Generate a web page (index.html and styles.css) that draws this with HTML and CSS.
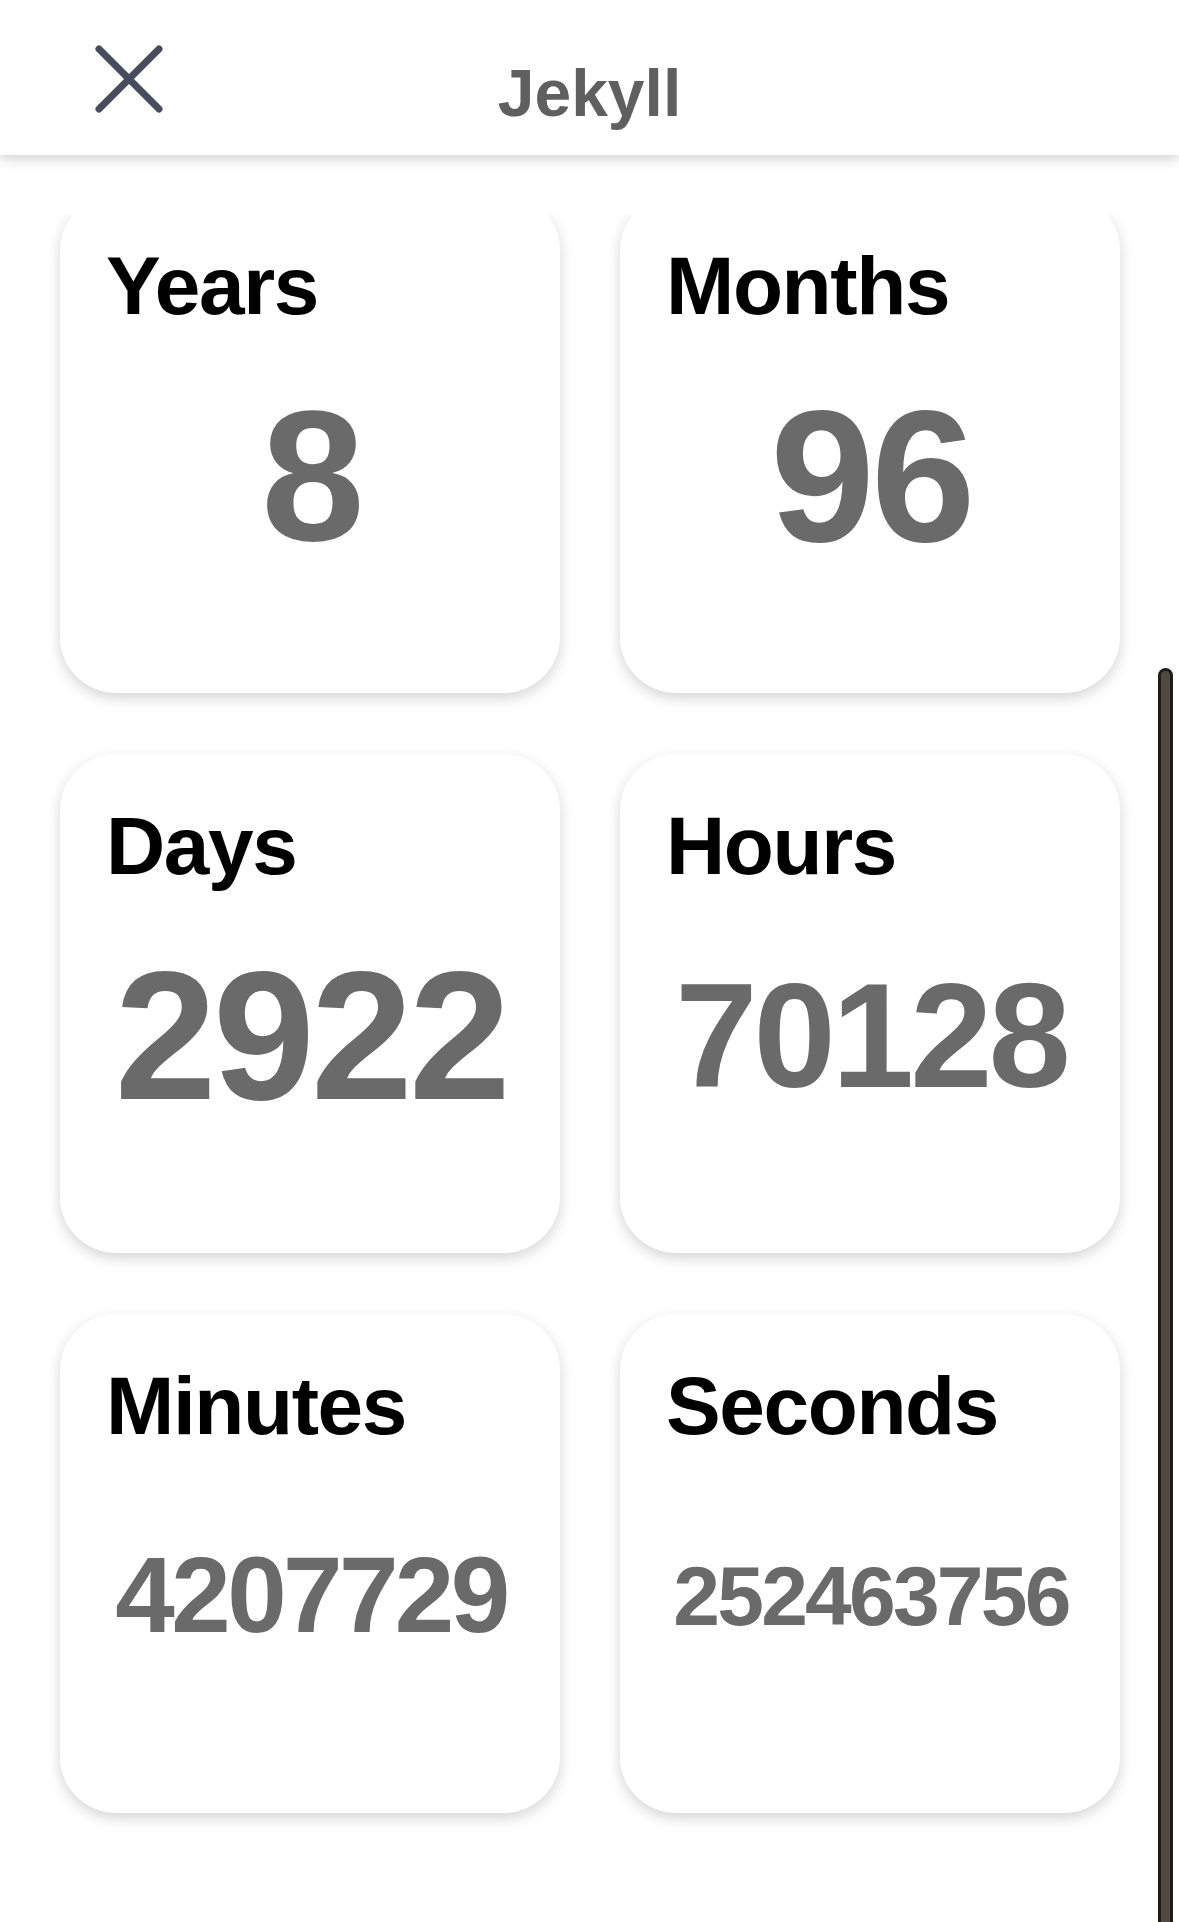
FILE: index.html
```html
<!DOCTYPE html>
<html lang="en">
<head>
  <meta charset="UTF-8">
  <meta name="viewport" content="width=device-width, initial-scale=1.0">
  <title>Jekyll</title>
  <link rel="stylesheet" href="styles.css">
</head>
<body>
  <div class="app">
    <div class="topbar">
      <div class="close">
        <svg width="68" height="68" viewBox="0 0 68 68">
          <path d="M4 4 L64 64 M64 4 L4 64" stroke="#464c5c" stroke-width="7" stroke-linecap="round" fill="none"/>
        </svg>
      </div>
      <div class="title">Jekyll</div>
      <div></div>
    </div>

    <div class="content">
      <div class="grid">
        <div class="card">
          <div class="label">Years</div>
          <div class="value"><span style="font-size: 186px">8</span></div>
        </div>
        <div class="card">
          <div class="label">Months</div>
          <div class="value"><span style="font-size: 188px">96</span></div>
        </div>
        <div class="card">
          <div class="label">Days</div>
          <div class="value"><span style="font-size: 183px">2922</span></div>
        </div>
        <div class="card">
          <div class="label">Hours</div>
          <div class="value"><span style="font-size: 148px; letter-spacing: -4px">70128</span></div>
        </div>
        <div class="card">
          <div class="label">Minutes</div>
          <div class="value"><span style="font-size: 107px; letter-spacing: -3.6px">4207729</span></div>
        </div>
        <div class="card">
          <div class="label">Seconds</div>
          <div class="value"><span style="font-size: 84px; letter-spacing: -2.8px">252463756</span></div>
        </div>
      </div>
    </div>

    <div class="scrollbar"></div>
  </div>
</body>
</html>
```

FILE: styles.css
```css
body {
  margin: 0;
  padding: 0;
  background: #fff;
  font-family: 'Liberation Sans', Helvetica, Arial, sans-serif;
  color: #000;
  overflow: hidden;
}
.app {
  height: 100vh;
  display: flex;
  flex-direction: column;
  position: relative;
}
.topbar {
  height: 155px;
  flex-shrink: 0;
  display: grid;
  grid-template-columns: 1fr auto 1fr;
  align-items: start;
  background: #fff;
  box-shadow: 0 4px 12px rgba(0, 0, 0, 0.18);
  position: relative;
  z-index: 2;
}
.close {
  margin: 45px 0 0 95px;
  width: 68px;
  height: 68px;
}
.close svg {
  display: block;
}
.title {
  margin-top: 55px;
  font-size: 66px;
  font-weight: bold;
  color: #5f5f5f;
}
.content {
  flex: 1;
  margin-top: 60px;
  overflow: hidden;
}
.grid {
  margin-top: -21px;
  padding: 0 59px 0 60px;
  display: grid;
  grid-template-columns: 1fr 1fr;
  column-gap: 60px;
  row-gap: 61px;
}
.card {
  height: 499px;
  box-sizing: border-box;
  background: #fff;
  border-radius: 56px;
  box-shadow: 0 5px 14px rgba(0, 0, 0, 0.17);
  padding: 45px 44px 74px 46px;
  display: flex;
  flex-direction: column;
}
.label {
  font-size: 82px;
  font-weight: bold;
  letter-spacing: -1.4px;
}
.value {
  flex: 1;
  display: flex;
  align-items: center;
  justify-content: center;
}
.value span {
  font-weight: bold;
  color: #6a6a6a;
  letter-spacing: -0.02em;
  line-height: 1.15;
  white-space: nowrap;
}
.scrollbar {
  position: absolute;
  left: 1158px;
  top: 668px;
  bottom: 0;
  width: 9px;
  background: #524a41;
  border: 3px solid #1f1b17;
  border-bottom: none;
  border-radius: 8px 8px 0 0;
}
```
